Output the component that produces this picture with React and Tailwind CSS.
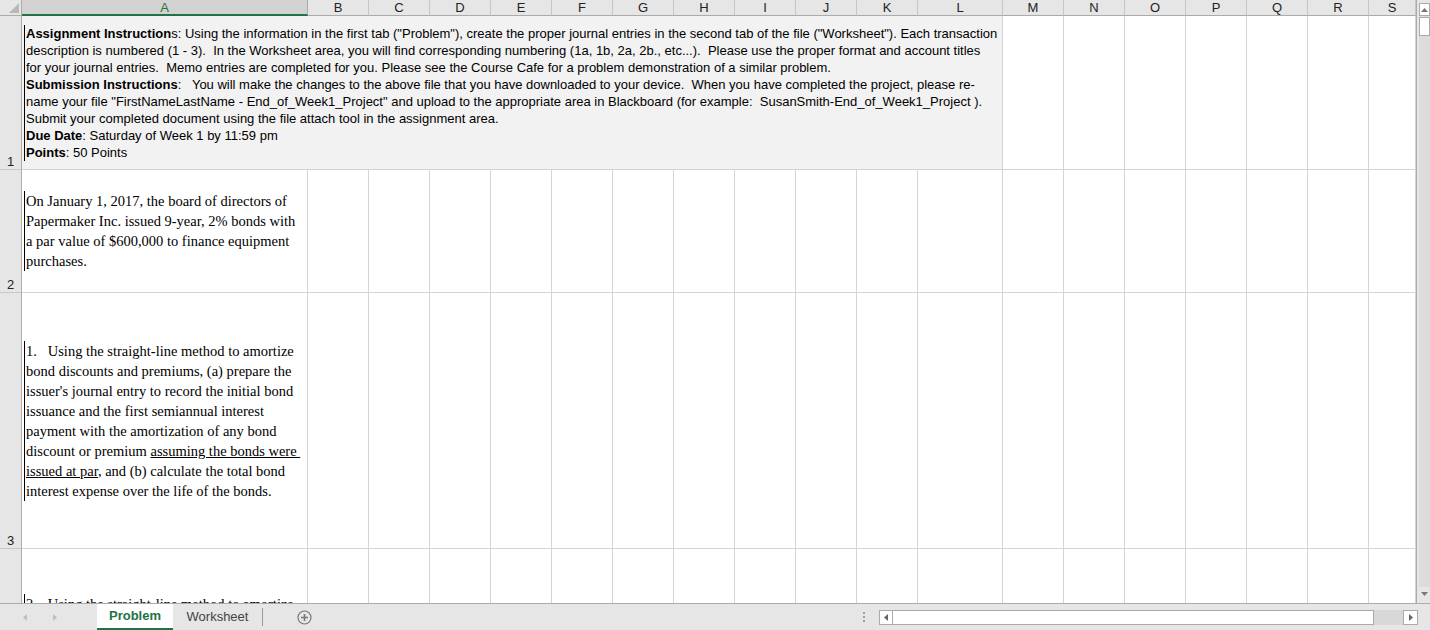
import React from "react";

const COLS = ["A", "B", "C", "D", "E", "F", "G", "H", "I", "J", "K", "L", "M", "N", "O", "P", "Q", "R", "S"];
const GRID = "grid grid-cols-[22px_286px_repeat(10,61px)_85px_repeat(6,61px)_47px]";
const SANS = { fontFamily: '"Liberation Sans", Arial, sans-serif' };
const SERIF = { fontFamily: '"Liberation Serif", "Times New Roman", serif' };

function RowHead({ n }) {
  return (
    <div
      className="bg-[#e6e6e6] border-r border-b border-r-[#ababab] border-b-[#c8c8c8] flex items-end justify-center pb-[1px] text-[13px] leading-none text-[#222]"
      style={SANS}
    >
      {n}
    </div>
  );
}

function Cell() {
  return <div className="border-r border-b border-[#d4d4d4] bg-white" />;
}

function HeaderRow() {
  return (
    <div className={`${GRID} h-[16px]`}>
      <div className="bg-[#e6e6e6] border-r border-b border-[#ababab] relative">
        <svg className="absolute right-[2px] bottom-[2px]" width="10" height="10" viewBox="0 0 10 10">
          <polygon points="10,0 10,10 0,10" fill="#b8b8b8" />
        </svg>
      </div>
      {COLS.map((c) =>
        c === "A" ? (
          <div
            key={c}
            className="bg-[#d2d2d2] border-r border-[#ababab] border-b-2 border-b-[#217346] flex items-center justify-center text-[13px] leading-none text-[#217346]"
            style={SANS}
          >
            {c}
          </div>
        ) : (
          <div
            key={c}
            className="bg-[#e6e6e6] border-r border-r-[#c6c6c6] border-b border-b-[#ababab] flex items-center justify-center text-[13px] leading-none text-[#222]"
            style={SANS}
          >
            {c}
          </div>
        )
      )}
    </div>
  );
}

function Filler({ from }) {
  return COLS.slice(from).map((c) => <Cell key={c} />);
}

export default function App() {
  return (
    <div className="w-[1430px] h-[630px] bg-white flex flex-col overflow-hidden">
      <div className="flex h-[603px]">
        <div className="w-[1416px] h-[603px] overflow-hidden">
          <HeaderRow />

          <div className={`${GRID} h-[154px]`}>
            <RowHead n="1" />
            <div className="col-span-12 bg-[#f2f2f2] border-r border-b border-[#d4d4d4] flex items-center pl-[2px]">
              <div className="border-l border-black pl-[1px] text-[13px] leading-[17px] text-black whitespace-pre" style={SANS}>
                <div>
                  <b>Assignment Instruction</b>s: Using the information in the first tab ("Problem"), create the proper journal entries in the second tab of the file ("Worksheet"). Each transaction
                </div>
                <div>description is numbered (1 - 3).  In the Worksheet area, you will find corresponding numbering (1a, 1b, 2a, 2b., etc...).  Please use the proper format and account titles</div>
                <div>for your journal entries.  Memo entries are completed for you. Please see the Course Cafe for a problem demonstration of a similar problem.</div>
                <div>
                  <b>Submission Instructions</b>:   You will make the changes to the above file that you have downloaded to your device.  When you have completed the project, please re-
                </div>
                <div>name your file "FirstNameLastName - End_of_Week1_Project" and upload to the appropriate area in Blackboard (for example:  SusanSmith-End_of_Week1_Project ).</div>
                <div>Submit your completed document using the file attach tool in the assignment area.</div>
                <div>
                  <b>Due Date</b>: Saturday of Week 1 by 11:59 pm
                </div>
                <div>
                  <b>Points</b>: 50 Points
                </div>
              </div>
            </div>
            <Filler from={12} />
          </div>

          <div className={`${GRID} h-[123px]`}>
            <RowHead n="2" />
            <div className="border-r border-b border-[#d4d4d4] flex items-center pl-[2px]">
              <div className="border-l border-black pl-[1px] text-[14.5px] leading-[20px] text-black whitespace-pre" style={SERIF}>
                <div>On January 1, 2017, the board of directors of</div>
                <div>Papermaker Inc. issued 9-year, 2% bonds with</div>
                <div>a par value of $600,000 to finance equipment</div>
                <div>purchases.</div>
              </div>
            </div>
            <Filler from={1} />
          </div>

          <div className={`${GRID} h-[256px]`}>
            <RowHead n="3" />
            <div className="border-r border-b border-[#d4d4d4] flex items-center pl-[2px]">
              <div className="border-l border-black pl-[1px] text-[14.5px] leading-[20px] text-black whitespace-pre" style={SERIF}>
                <div>1.   Using the straight-line method to amortize</div>
                <div>bond discounts and premiums, (a) prepare the</div>
                <div>issuer's journal entry to record the initial bond</div>
                <div>issuance and the first semiannual interest</div>
                <div>payment with the amortization of any bond</div>
                <div>
                  discount or premium <span className="underline">assuming the bonds were </span>
                </div>
                <div>
                  <span className="underline">issued at par</span>, and (b) calculate the total bond
                </div>
                <div>interest expense over the life of the bonds.</div>
              </div>
            </div>
            <Filler from={1} />
          </div>

          <div className={`${GRID} h-[60px]`}>
            <RowHead n="" />
            <div className="border-r border-[#d4d4d4] pl-[2px] pt-[45px] overflow-hidden">
              <div className="border-l border-black pl-[1px] text-[14.5px] leading-[20px] text-black whitespace-pre" style={SERIF}>
                <div>2.   Using the straight-line method to amortize</div>
              </div>
            </div>
            {COLS.slice(1).map((c) => (
              <div key={c} className="border-r border-[#d4d4d4] bg-white" />
            ))}
          </div>
        </div>

        <div className="w-[14px] h-[603px] bg-[#e6e6e6] border-l border-[#ababab] flex flex-col pl-[2px] pt-[3px] pb-[3px]">
          <div className="flex-1 bg-[#dcdcdc] flex flex-col">
            <div className="h-[13px] bg-white border border-[#ababab] flex items-center justify-center">
              <svg width="7" height="4" viewBox="0 0 7 4">
                <polygon points="3.5,0 7,4 0,4" fill="#777" />
              </svg>
            </div>
            <div className="h-[19px] mt-[1px] bg-white border border-[#ababab]" />
            <div className="flex-1" />
            <div className="h-[13px] bg-[#e6e6e6] flex items-center justify-center">
              <svg width="7" height="4" viewBox="0 0 7 4">
                <polygon points="0,0 7,0 3.5,4" fill="#777" />
              </svg>
            </div>
          </div>
        </div>
      </div>

      <div className="h-[27px] bg-[#e6e6e6] border-t border-[#ababab] flex items-stretch" style={SANS}>
        <div className="w-[97px] flex items-center">
          <svg className="ml-[23px]" width="4" height="7" viewBox="0 0 4 7">
            <polygon points="4,0 4,7 0,3.5" fill="#bdbdbd" />
          </svg>
          <svg className="ml-[26px]" width="4" height="7" viewBox="0 0 4 7">
            <polygon points="0,0 0,7 4,3.5" fill="#bdbdbd" />
          </svg>
        </div>
        <div className="w-[76px] bg-white border-b-2 border-[#217346] flex items-center justify-center text-[13px] font-bold text-[#217346]">
          Problem
        </div>
        <div className="w-[89px] flex items-center justify-center text-[13px] text-[#444]">Worksheet</div>
        <div className="w-px bg-[#9a9a9a] my-[4px]" />
        <div className="w-[82px] flex items-center justify-center">
          <svg width="15" height="15" viewBox="0 0 15 15">
            <circle cx="7.5" cy="7.5" r="6.5" fill="none" stroke="#777" strokeWidth="1.2" />
            <path d="M7.5 4v7M4 7.5h7" stroke="#777" strokeWidth="1.6" />
          </svg>
        </div>
        <div className="flex-1 flex items-center">
          <div className="ml-[518px] flex flex-col gap-[2px]">
            <div className="w-[2px] h-[2px] bg-[#a0a0a0]" />
            <div className="w-[2px] h-[2px] bg-[#a0a0a0]" />
            <div className="w-[2px] h-[2px] bg-[#a0a0a0]" />
          </div>
          <div className="ml-[14px] h-[15px] flex">
            <div className="w-[14px] bg-white border border-[#ababab] flex items-center justify-center">
              <svg width="4" height="7" viewBox="0 0 4 7">
                <polygon points="4,0 4,7 0,3.5" fill="#666" />
              </svg>
            </div>
            <div className="w-[481px] bg-white border border-l-0 border-[#ababab]" />
            <div className="w-[29px] bg-[#d8d8d8]" />
            <div className="w-[15px] bg-white border border-[#ababab] flex items-center justify-center">
              <svg width="4" height="7" viewBox="0 0 4 7">
                <polygon points="0,0 0,7 4,3.5" fill="#666" />
              </svg>
            </div>
          </div>
        </div>
      </div>
    </div>
  );
}
